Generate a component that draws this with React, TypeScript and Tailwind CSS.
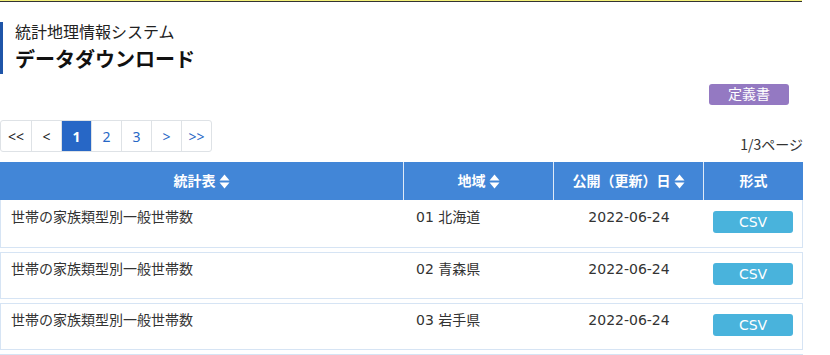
import React from "react";

const rows = [
  { title: "世帯の家族類型別一般世帯数", area: "01 北海道", date: "2022-06-24" },
  { title: "世帯の家族類型別一般世帯数", area: "02 青森県", date: "2022-06-24" },
  { title: "世帯の家族類型別一般世帯数", area: "03 岩手県", date: "2022-06-24" },
];

const pages = [
  { label: "<<", kind: "off" },
  { label: "<", kind: "off" },
  { label: "1", kind: "on" },
  { label: "2", kind: "link" },
  { label: "3", kind: "link" },
  { label: ">", kind: "link" },
  { label: ">>", kind: "link" },
];

function SortIcon() {
  return (
    <svg width="11" height="15" viewBox="0 0 11 15" className="ml-[3px]">
      <path d="M5.5 0.5 L10.5 6.5 L0.5 6.5 Z" fill="white" />
      <path d="M0.5 8.5 L10.5 8.5 L5.5 14.5 Z" fill="white" />
    </svg>
  );
}

export default function App() {
  return (
    <div
      className="w-[830px] h-[355px] overflow-hidden bg-white text-[#333]"
      style={{ fontFamily: '"DejaVu Sans", "Noto Sans CJK JP", sans-serif' }}
    >
      <div className="w-[802px] h-[2px] bg-[#f3f07a] border-b border-[#333]" />

      <div className="w-[803px]">
        <div className="mt-[20px] border-l-[3px] border-[#1f55a8] pl-[12px]">
          <div className="text-[16px] leading-[22px] text-[#222]">統計地理情報システム</div>
          <div className="text-[20px] leading-[28px] font-bold text-[#111] mt-[2px]">
            データダウンロード
          </div>
        </div>

        <div className="flex justify-end mt-[10px] pr-[14px]">
          <button className="w-[80px] h-[21px] rounded-[3px] bg-[#9479c2] text-white text-[14px] leading-[21px]">
            定義書
          </button>
        </div>

        <div className="flex justify-between items-end mt-[15px]">
          <div
            className="flex border border-[#dee2e6] rounded-[3px] overflow-hidden h-[32px]"
            style={{ fontFamily: '"Noto Sans", sans-serif' }}
          >
            {pages.map((p, i) => (
              <div
                key={i}
                className={
                  "w-[30px] flex items-center justify-center text-[14px] " +
                  (i > 0 ? "border-l border-[#dee2e6] " : "") +
                  (p.kind === "on"
                    ? "bg-[#2767c6] text-white font-bold"
                    : p.kind === "link"
                    ? "text-[#2767c6]"
                    : "text-[#222]")
                }
              >
                {p.label}
              </div>
            ))}
          </div>
          <div
            className="text-[14px] leading-[18px] text-[#333] mb-[-1px]"
            style={{ fontFamily: '"Noto Sans CJK JP", sans-serif' }}
          >
            1/3ページ
          </div>
        </div>

        <div className="mt-[10px]">
          <div className="grid grid-cols-[403px_150px_150px_100px] h-[38px] bg-[#4286d7] text-white text-[14px] font-bold">
            <div className="flex items-center justify-center">
              統計表<SortIcon />
            </div>
            <div className="flex items-center justify-center border-l border-[#dfeaf7]">
              地域<SortIcon />
            </div>
            <div className="flex items-center justify-center border-l border-[#dfeaf7]">
              公開（更新）日<SortIcon />
            </div>
            <div className="flex items-center justify-center border-l border-[#dfeaf7]">
              形式
            </div>
          </div>

          {rows.map((r, i) => (
            <div
              key={i}
              className={
                "grid grid-cols-[403px_150px_150px_100px] border border-[#d6e4f4] text-[14px] text-[#333] " +
                (i === 0 ? "border-t-0 h-[48px]" : "mt-[4px] h-[47px]")
              }
            >
              <div className={"pl-[10px] leading-[20px] " + (i === 0 ? "pt-[7px]" : "pt-[6px]")}>{r.title}</div>
              <div className={"pl-[12px] leading-[20px] " + (i === 0 ? "pt-[7px]" : "pt-[6px]")}>{r.area}</div>
              <div className={"text-center leading-[20px] " + (i === 0 ? "pt-[7px]" : "pt-[6px]")}>{r.date}</div>
              <div className={"pl-[9px] " + (i === 0 ? "pt-[11px]" : "pt-[10px]")}>
                <button className="w-[80px] h-[22px] rounded-[3px] bg-[#49b3dc] text-white text-[14px] leading-[22px]">
                  CSV
                </button>
              </div>
            </div>
          ))}
          <div className="mt-[4px] h-[10px] border border-[#d6e4f4]" />
        </div>
      </div>
    </div>
  );
}
